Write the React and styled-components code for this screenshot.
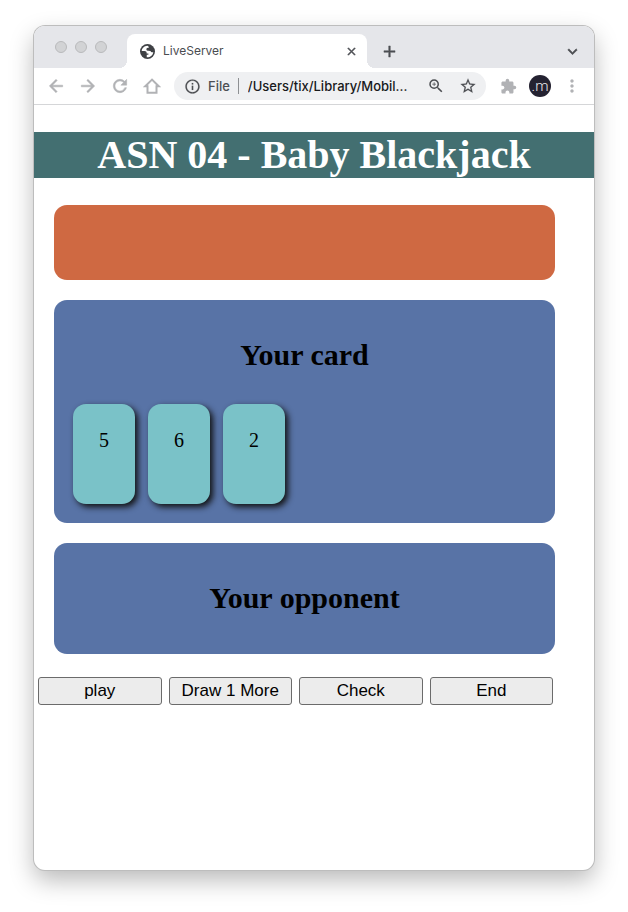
import React from "react";
import styled, { createGlobalStyle } from "styled-components";
import {
  MdArrowBack,
  MdArrowForward,
  MdRefresh,
  MdInfoOutline,
  MdZoomIn,
  MdStarBorder,
  MdExtension,
  MdMoreVert,
  MdClose,
  MdAdd,
  MdExpandMore,
} from "react-icons/md";

const GlobalStyle = createGlobalStyle`
  *, *::before, *::after { box-sizing: border-box; }
  body { margin: 0; background: #fff; }
`;

const Desktop = styled.div`
  display: flex;
  min-height: 100vh;
  padding: 26px 34px 42px;
`;

const BrowserWindow = styled.div`
  flex: 1;
  min-width: 0;
  display: flex;
  flex-direction: column;
  overflow: hidden;
  border-radius: 11px;
  background: #fff;
  box-shadow: 0 0 0 1px #bdbdbd, 0 10px 24px rgba(0, 0, 0, 0.28);
  font-family: Inter, Roboto, sans-serif;
`;

const TabStrip = styled.header`
  display: flex;
  align-items: flex-end;
  height: 42px;
  padding-right: 12px;
  background: #e5e6ea;
`;

const Lights = styled.div`
  display: flex;
  align-self: center;
  gap: 8px;
  width: 93px;
  padding-left: 21px;
`;

const Light = styled.span`
  width: 12px;
  height: 12px;
  border: 1px solid #b9babc;
  border-radius: 50%;
  background: #d2d3d5;
`;

const Tab = styled.div`
  position: relative;
  display: flex;
  align-items: center;
  flex: 0 1 240px;
  height: 34px;
  padding: 0 8px 0 13px;
  border-radius: 8px 8px 0 0;
  background: #fff;
  color: #4a4c50;
  font: 12px/16px Inter, sans-serif;

  &::before,
  &::after {
    content: "";
    position: absolute;
    bottom: 0;
    width: 8px;
    height: 8px;
  }
  &::before {
    right: 100%;
    background: radial-gradient(circle at 0 0, transparent 8px, #fff 8px);
  }
  &::after {
    left: 100%;
    background: radial-gradient(circle at 100% 0, transparent 8px, #fff 8px);
  }
`;

const TabTitle = styled.span`
  flex: 1;
  margin-left: 8px;
`;

const IconButton = styled.button`
  display: grid;
  place-items: center;
  flex: none;
  width: ${(p) => p.$size || 20}px;
  height: ${(p) => p.$size || 20}px;
  padding: 0;
  border: 0;
  background: none;
  color: ${(p) => (p.$muted ? "#b1b2b5" : "#4d4f53")};

  svg {
    stroke-width: ${(p) => p.$stroke || 0};
  }
  /* The icon set's invisible 24-unit frame must stay unstroked. */
  path[d^="M0 0h24"] {
    stroke: none;
  }
`;

const StripActions = styled.div`
  display: flex;
  flex: 1;
  align-items: center;
  justify-content: space-between;
  height: 34px;
  padding-left: 12px;
`;

const Toolbar = styled.nav`
  display: flex;
  align-items: center;
  height: 37px;
  padding: 0 12px;
  border-bottom: 1px solid #d5d6d8;
`;

const Navigation = styled.div`
  display: flex;
  gap: 12px;
  margin-right: 12px;
`;

const AddressBar = styled.div`
  display: flex;
  align-items: center;
  flex: 1;
  min-width: 0;
  height: 28px;
  padding: 0 8px;
  border-radius: 14px;
  background: #eff0f2;
  color: #4d4f53;
`;

const Scheme = styled.label`
  margin-left: 6px;
  padding-right: 8px;
  border-right: 1px solid #8e9093;
  font: 500 13px/16px Inter, sans-serif;
`;

const Address = styled.input`
  flex: 1;
  min-width: 0;
  margin: 0 4px 0 9px;
  padding: 0;
  border: 0;
  background: none;
  color: #18191b;
  font: 500 13px/20px Inter, sans-serif;
`;

const Extras = styled.div`
  display: flex;
  align-items: center;
  gap: 11px;
  margin-left: 12px;
`;

const Avatar = styled.button`
  width: 22px;
  height: 22px;
  padding: 0;
  border: 0;
  border-radius: 50%;
  background: #242231;
  color: #e9e9ec;
  font: 300 15px/20px Roboto, sans-serif;
`;

const Page = styled.main`
  font-family: "Liberation Serif", "Times New Roman", serif;
  color: #000;
`;

const Title = styled.h1`
  margin: 27px 0;
  background: #436f71;
  color: #fff;
  font-size: 40px;
  line-height: 46px;
  text-align: center;
`;

const Board = styled.div`
  display: flex;
  flex-direction: column;
  gap: 20px;
  margin: 0 39px 0 20px;
`;

const Message = styled.section`
  height: 75px;
  border-radius: 13px;
  background: #cf6942;
`;

const Hand = styled.section`
  padding: 13px;
  border-radius: 13px;
  background: #5873a6;
`;

const HandTitle = styled.h2`
  margin: 25px 0 26px;
  font-size: 30px;
  line-height: 34px;
  text-align: center;
`;

const Cards = styled.div`
  display: flex;
  flex-wrap: wrap;
  gap: 13px;
  padding: 6px;
`;

const Card = styled.div`
  width: 62px;
  height: 100px;
  padding-top: 25px;
  border-radius: 13px;
  background: #7ac2c8;
  box-shadow: 3px 3px 6px #111;
  font-size: 20px;
  line-height: 23px;
  text-align: center;
`;

const Controls = styled.div`
  display: grid;
  grid-template-columns: repeat(4, 1fr);
  gap: 7px;
  margin: 23px 41px 0 4px;
`;

const GameButton = styled.button`
  height: 28px;
  padding: 0;
  border: 1px solid #6b6b6b;
  border-radius: 3px;
  background: #ececec;
  color: #000;
  font: 17px/26px "Liberation Sans", Arial, sans-serif;
`;

const GlobeIcon = () => (
  <svg width="15" height="15" viewBox="0 0 14 14" aria-hidden="true">
    <circle cx="7" cy="7" r="7" fill="#3f4145" />
    <path
      d="M6.8 1.6C3.9 1.7 1.7 3.9 1.6 6.6h2.6c1.3 0 2 .7 2 1.7v.5h1.6v1.3H6.3v2.2c3 .3 5.8-1.8 6.1-4.7h-1.5c-.5 0-.8-.7-1.3-1-.5-.3-1.5-.2-2.4-.3-.9-.2-1.4-.9-1.2-1.7.3-.9 1-1 2.2-1 .1-1.1-.4-1.8-1.4-2z"
      fill="#fff"
    />
  </svg>
);

const HomeIcon = () => (
  <svg width="18" height="18" viewBox="0 0 18 18" aria-hidden="true">
    <path
      d="M9 2.6 2.3 9.2h2.2v6.6h9V9.2h2.2z"
      fill="none"
      stroke="currentColor"
    />
  </svg>
);

const hand = [5, 6, 2];
const actions = ["play", "Draw 1 More", "Check", "End"];

export default function App() {
  return (
    <>
      <GlobalStyle />
      <Desktop>
        <BrowserWindow>
          <TabStrip>
            <Lights>
              <Light />
              <Light />
              <Light />
            </Lights>
            <Tab>
              <GlobeIcon />
              <TabTitle>LiveServer</TabTitle>
              <IconButton $size={16} $stroke={1} aria-label="Close tab"><MdClose size={13} /></IconButton>
            </Tab>
            <StripActions>
              <IconButton $stroke={0.6} aria-label="New tab"><MdAdd size={19} /></IconButton>
              <IconButton $stroke={0.6} aria-label="Search tabs"><MdExpandMore size={19} /></IconButton>
            </StripActions>
          </TabStrip>
          <Toolbar>
            <Navigation>
              <IconButton $muted $stroke={0.6} aria-label="Back"><MdArrowBack size={20} /></IconButton>
              <IconButton $muted $stroke={0.6} aria-label="Forward"><MdArrowForward size={20} /></IconButton>
              <IconButton $muted $stroke={0.6} aria-label="Reload"><MdRefresh size={20} /></IconButton>
              <IconButton $muted $stroke={2} aria-label="Home"><HomeIcon /></IconButton>
            </Navigation>
            <AddressBar>
              <IconButton $stroke={0.2} aria-label="Site information"><MdInfoOutline size={17} /></IconButton>
              <Scheme htmlFor="address">File</Scheme>
              <Address id="address" readOnly value="/Users/tix/Library/Mobil..." />
              <IconButton aria-label="Zoom"><MdZoomIn size={18} /></IconButton>
              <Extras>
                <IconButton $stroke={0.2} aria-label="Bookmark"><MdStarBorder size={18} /></IconButton>
              </Extras>
            </AddressBar>
            <Extras>
              <IconButton $muted aria-label="Extensions"><MdExtension size={17} /></IconButton>
              <Avatar aria-label="Profile">.m</Avatar>
              <IconButton $muted aria-label="Menu"><MdMoreVert size={20} /></IconButton>
            </Extras>
          </Toolbar>
          <Page>
            <Title>ASN 04 - Baby Blackjack</Title>
            <Board>
              <Message />
              <Hand>
                <HandTitle>Your card</HandTitle>
                <Cards>
                  {hand.map((value) => (
                    <Card key={value}>{value}</Card>
                  ))}
                </Cards>
              </Hand>
              <Hand>
                <HandTitle>Your opponent</HandTitle>
              </Hand>
            </Board>
            <Controls>
              {actions.map((label) => (
                <GameButton key={label} type="button">{label}</GameButton>
              ))}
            </Controls>
          </Page>
        </BrowserWindow>
      </Desktop>
    </>
  );
}
